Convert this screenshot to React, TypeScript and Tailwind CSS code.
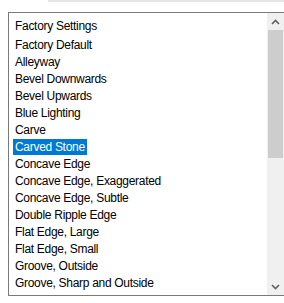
const items = [
  'Factory Default',
  'Alleyway',
  'Bevel Downwards',
  'Bevel Upwards',
  'Blue Lighting',
  'Carve',
  'Carved Stone',
  'Concave Edge',
  'Concave Edge, Exaggerated',
  'Concave Edge, Subtle',
  'Double Ripple Edge',
  'Flat Edge, Large',
  'Flat Edge, Small',
  'Groove, Outside',
  'Groove, Sharp and Outside',
];

const selected = 'Carved Stone';

function Chevron({ down }: { down?: boolean }) {
  return (
    <svg width="9" height="6" viewBox="0 0 9 6">
      <polyline
        points={down ? '1,1 4.5,4.5 8,1' : '1,5 4.5,1.5 8,5'}
        fill="none"
        stroke="#606060"
        strokeWidth="1.6"
      />
    </svg>
  );
}

export default function App() {
  return (
    <div
      className="w-[284px] h-[303px] bg-white overflow-hidden relative"
      style={{ fontFamily: '"Liberation Sans", Arial, sans-serif' }}
    >
      {/* edge of the control above */}
      <div className="ml-[48px] h-[2px] bg-[#e6e6e6]" />

      <div className="ml-[8px] mt-[10px] w-[277px] h-[284px] border border-[#7a7a7a] flex">
        <div className="flex-1 flex flex-col text-[12px] text-black tracking-[-0.3px]">
          <div className="h-[23px] pl-[6px] pt-[6px] leading-[14px]">Factory Settings</div>
          {items.map((item) => (
            <div key={item} className="h-[17px] pl-[4px] flex items-center">
              <span
                className={
                  item === selected
                    ? 'bg-[#0078d7] text-white px-[2px] h-[16px] leading-[16px]'
                    : 'px-[2px] leading-[16px]'
                }
              >
                {item}
              </span>
            </div>
          ))}
        </div>

        <div className="w-[17px] bg-[#f0f0f0] flex flex-col items-center">
          <div className="h-[17px] w-full flex items-center justify-center">
            <Chevron />
          </div>
          <div className="w-[15px] h-[128px] bg-[#cdcdcd]" />
          <div className="flex-1" />
          <div className="h-[17px] w-full flex items-center justify-center">
            <Chevron down />
          </div>
        </div>
      </div>
    </div>
  );
}
